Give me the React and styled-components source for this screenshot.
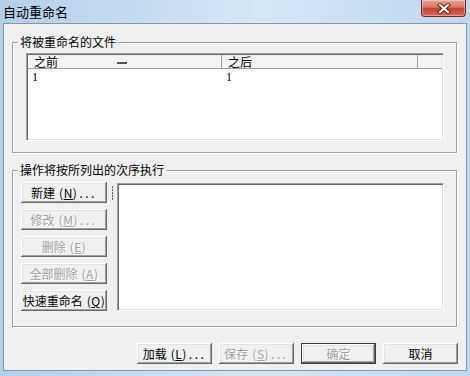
import React from "react";
import styled, { createGlobalStyle, css } from "styled-components";

const GlobalStyle = createGlobalStyle`
  html, body {
    margin: 0;
    padding: 0;
    background: #fff;
  }
  body {
    font-family: "Noto Sans CJK SC", "Liberation Sans", sans-serif;
    font-size: 12px;
    color: #000;
  }
`;

const sunken = css`
  box-sizing: border-box;
  background: #fff;
  border: 1px solid;
  border-color: #a0a0a0 #fff #fff #a0a0a0;
  padding: 1px;
  box-shadow: inset 1px 1px 0 #696969, inset -1px -1px 0 #e3e3e3;
`;

const Window = styled.div`
  width: 470px;
  height: 376px;
  box-sizing: border-box;
  padding: 0 3px 5px 3px;
  background: linear-gradient(to right, #b5cee9 0%, #d6e7f7 55%, #c0d7ee 100%);
  display: flex;
  flex-direction: column;
`;

const TitleBar = styled.div`
  height: 23px;
  flex: none;
  display: flex;
  align-items: flex-start;
  justify-content: space-between;
`;

const Title = styled.span`
  margin-top: 3px;
  font-size: 13px;
  line-height: 17px;
  color: #000;
`;

const CloseButton = styled.div`
  width: 45px;
  height: 17px;
  margin-right: 1px;
  box-sizing: border-box;
  border: 1px solid #6e2b22;
  border-top: none;
  border-radius: 0 0 4px 4px;
  background: linear-gradient(
    to bottom,
    #e7a596 0%,
    #d97868 45%,
    #c4442f 52%,
    #d66a55 100%
  );
  box-shadow: inset 0 0 0 1px rgba(255, 255, 255, 0.35);
  display: flex;
  align-items: center;
  justify-content: center;
`;

const Client = styled.div`
  flex: 1;
  background: #f0f0f0;
  border: 1px solid #8397b0;
  display: flex;
  flex-direction: column;
`;

const GroupBox = styled.fieldset`
  margin: ${({ $top }) => $top}px 9px 0 8px;
  padding: 0 5px;
  border: 1px solid #a0a0a0;
  box-shadow: inset 1px 1px 0 #fff, 1px 1px 0 #fff;
  min-width: 0;
`;

const Legend = styled.legend`
  padding: 0 2px;
  font-size: 12px;
  line-height: 16px;
  background: #f0f0f0;
`;

const GroupBody = styled.div`
  padding: ${({ $pad }) => $pad};
  display: flex;
`;

const ListView = styled.div`
  ${sunken};
  width: 100%;
  height: 88px;
  display: flex;
  flex-direction: column;
`;

const HeaderRow = styled.div`
  display: flex;
  height: 13px;
  background: #f3f3f3;
  border-bottom: 1px solid #a0a0a0;
`;

const HeaderCell = styled.div`
  box-sizing: border-box;
  width: ${({ $w }) => ($w ? `${$w}px` : "auto")};
  flex: ${({ $w }) => ($w ? "none" : "1")};
  padding-left: 6px;
  border-right: ${({ $w }) => ($w ? "1px solid #a0a0a0" : "none")};
  font-size: 12px;
  line-height: 13px;
  display: flex;
  align-items: center;
`;

const SortMark = styled.span`
  width: 10px;
  height: 2px;
  margin-left: 59px;
  margin-top: 3px;
  background: #555;
`;

const Row = styled.div`
  display: flex;
  margin-top: 1px;
`;

const Cell = styled.div`
  box-sizing: border-box;
  width: ${({ $w }) => $w}px;
  padding-left: 4px;
  font-family: "Liberation Serif", serif;
  font-size: 12px;
  line-height: 14px;
`;

const ButtonColumn = styled.div`
  display: flex;
  flex-direction: column;
  gap: 6px;
  flex: none;
`;

const Button = styled.button`
  box-sizing: border-box;
  width: ${({ $w }) => $w}px;
  height: 21px;
  padding: 0;
  margin: 0;
  background: #f0f0f0;
  border: ${({ $default }) => ($default ? "1px solid #3c3c3c" : "none")};
  box-shadow: inset -1px -1px 0 #696969, inset 1px 1px 0 #fff,
    inset -2px -2px 0 #a0a0a0, inset 2px 2px 0 #e3e3e3;
  font-family: "Noto Sans CJK SC", "Liberation Sans", sans-serif;
  font-size: 12px;
  line-height: 14px;
  white-space: nowrap;
  color: ${({ disabled }) => (disabled ? "#a0a0a0" : "#000")};
  text-shadow: ${({ disabled }) => (disabled ? "1px 1px 0 #fff" : "none")};
`;

const Hotkey = styled.span`
  margin-left: 4px;
  letter-spacing: 0.5px;
`;

const Dots = styled.span`
  margin-left: 2px;
  letter-spacing: 2.5px;
`;

const Grip = styled.div`
  width: 1px;
  height: 14px;
  margin: 4px 4px 0 5px;
  flex: none;
  background: repeating-linear-gradient(
    to bottom,
    #606060 0 2px,
    #d8d8d8 2px 3px
  );
`;

const ListBox = styled.div`
  ${sunken};
  flex: 1;
  margin-top: 1px;
`;

const Footer = styled.div`
  margin-top: 16px;
  padding-right: 8px;
  display: flex;
  justify-content: flex-end;
  gap: 7px;
`;

const actions = [
  { label: "新建", key: "N", dots: true, disabled: false },
  { label: "修改", key: "M", dots: true, disabled: true },
  { label: "删除", key: "E", disabled: true },
  { label: "全部删除", key: "A", disabled: true },
  { label: "快速重命名", key: "Q", disabled: false },
];

const footerButtons = [
  { label: "加载", key: "L", dots: true },
  { label: "保存", key: "S", dots: true, disabled: true },
  { label: "确定", disabled: true, isDefault: true },
  { label: "取消" },
];

const Label = ({ label, hotkey, dots }) => (
  <>
    {label}
    {hotkey && (
      <Hotkey>
        (<u>{hotkey}</u>)
      </Hotkey>
    )}
    {dots && <Dots>...</Dots>}
  </>
);

const App = () => {
  return (
    <>
      <GlobalStyle />
      <Window>
        <TitleBar>
          <Title>自动重命名</Title>
          <CloseButton>
            <svg width="14" height="11" viewBox="0 0 14 11">
              <path
                d="M3 2 L11 9 M11 2 L3 9"
                stroke="#5a2119"
                strokeWidth="4"
                strokeLinecap="square"
              />
              <path
                d="M3 2 L11 9 M11 2 L3 9"
                stroke="#fff"
                strokeWidth="2"
                strokeLinecap="square"
              />
            </svg>
          </CloseButton>
        </TitleBar>
        <Client>
          <GroupBox $top={10}>
            <Legend>将被重命名的文件</Legend>
            <GroupBody $pad="3px 7px 11px 8px">
              <ListView>
                <HeaderRow>
                  <HeaderCell $w={194}>
                    之前
                    <SortMark />
                  </HeaderCell>
                  <HeaderCell $w={196}>之后</HeaderCell>
                  <HeaderCell />
                </HeaderRow>
                <Row>
                  <Cell $w={194}>1</Cell>
                  <Cell $w={196}>1</Cell>
                </Row>
              </ListView>
            </GroupBody>
          </GroupBox>

          <GroupBox $top={9}>
            <Legend>操作将按所列出的次序执行</Legend>
            <GroupBody $pad="4px 7px 15px 3px">
              <ButtonColumn>
                {actions.map((a) => (
                  <Button key={a.key} $w={86} disabled={a.disabled}>
                    <Label label={a.label} hotkey={a.key} dots={a.dots} />
                  </Button>
                ))}
              </ButtonColumn>
              <Grip />
              <ListBox />
            </GroupBody>
          </GroupBox>

          <Footer>
            {footerButtons.map((b) => (
              <Button
                key={b.label}
                $w={75}
                disabled={b.disabled}
                $default={b.isDefault}
              >
                <Label label={b.label} hotkey={b.key} dots={b.dots} />
              </Button>
            ))}
          </Footer>
        </Client>
      </Window>
    </>
  );
};

export default App;
